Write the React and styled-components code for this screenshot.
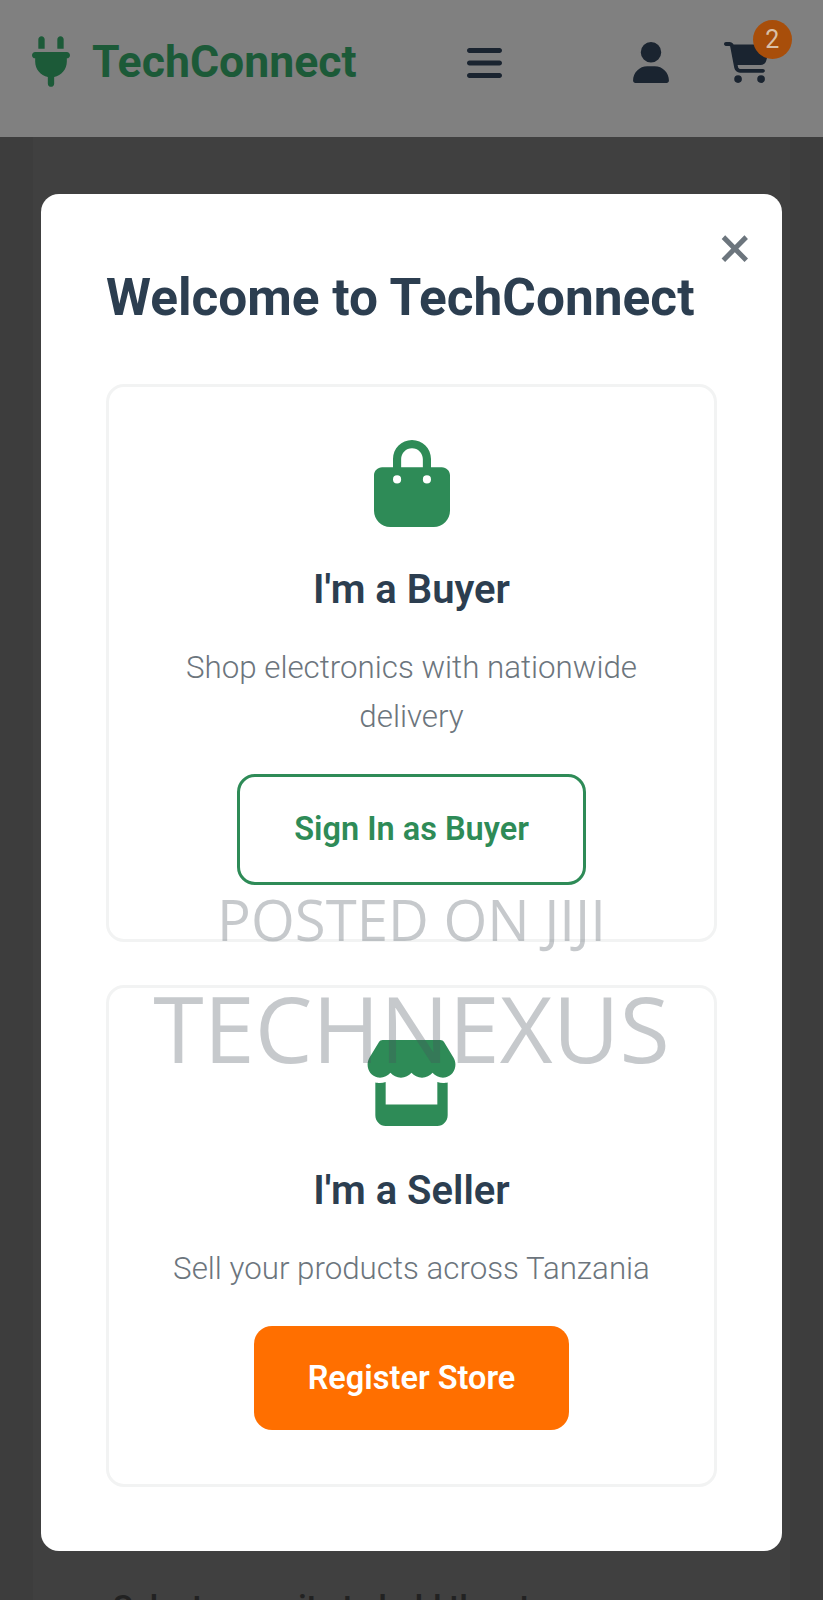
import React from 'react'
import styled, { createGlobalStyle } from 'styled-components'
import { FaPlug, FaBars, FaUser, FaCartShopping, FaBagShopping, FaStore } from 'react-icons/fa6'

const GlobalStyle = createGlobalStyle`
  html, body {
    margin: 0;
    padding: 0;
    height: 100%;
    overflow: hidden;
    background: #3d3d3d;
    font-family: Roboto, "Liberation Sans", sans-serif;
  }
  * { box-sizing: border-box; }
`

const Page = styled.div`
  position: relative;
  height: 1600px;
  overflow: hidden;
`

const Header = styled.header`
  display: flex;
  align-items: flex-start;
  height: 137px;
  padding: 36px 0 0 32px;
  background: #808080;
`

const Logo = styled.div`
  display: flex;
  align-items: flex-start;
  gap: 22px;
  color: #1c5a38;
  svg { width: 38px; height: 51px; }
`

const LogoText = styled.span`
  margin-top: 2px;
  font-size: 44.6px;
  font-weight: 700;
  line-height: 48px;
`

const MenuButton = styled.div`
  display: flex;
  margin: 7px 0 0 110px;
  color: #1a2430;
  svg { width: 35px; height: 40px; }
`

const HeaderIcons = styled.div`
  display: flex;
  align-items: flex-start;
  gap: 55px;
  margin: 6px 0 0 131px;
  color: #1a2430;
`

const UserIcon = styled(FaUser)`
  width: 36px;
  height: 41px;
`

const CartLink = styled.div`
  position: relative;
  display: flex;
  svg { width: 46px; height: 41px; }
`

const CartBadge = styled.span`
  position: absolute;
  top: -22px;
  right: -22px;
  width: 39px;
  height: 39px;
  border-radius: 50%;
  background: #a84e0a;
  color: #d9c0a8;
  font-size: 25px;
  line-height: 39px;
  text-align: center;
`

const Main = styled.main`
  margin: 0 33px;
  padding: 57px 8px 0;
  height: 1463px;
  background: #404040;
`

const Modal = styled.section`
  position: relative;
  padding: 72px 65px 64px;
  border-radius: 18px;
  background: #fff;
`

const CloseButton = styled.span`
  position: absolute;
  top: 18px;
  right: 31px;
  color: #6c757d;
  font-size: 60px;
  font-weight: 400;
  line-height: 72px;
`

const Title = styled.h2`
  margin: 0 0 54px;
  color: #2c3e50;
  font-size: 51.4px;
  font-weight: 700;
  line-height: 64px;
  white-space: nowrap;
`

const RoleCard = styled.div`
  display: flex;
  flex-direction: column;
  align-items: center;
  margin-top: ${(p) => (p.$first ? 0 : '43px')};
  padding: ${(p) => (p.$first ? '53px 20px 54px' : '52px 20px 54px')};
  border: 3px solid #f2f3f3;
  border-radius: 18px;
  text-align: center;
`

const RoleIcon = styled.div`
  display: flex;
  margin-bottom: ${(p) => p.$gap}px;
  color: #2e8b57;
  svg { width: ${(p) => p.$width}px; height: ${(p) => p.$height}px; }
`

const RoleTitle = styled.h3`
  margin: 0 0 31px;
  color: #2c3e50;
  font-size: 40px;
  font-weight: 600;
  line-height: 44px;
`

const RoleText = styled.p`
  max-width: 500px;
  margin: 0 0 ${(p) => p.$gap}px;
  color: #6c757d;
  font-size: 31.3px;
  font-weight: 300;
  line-height: 49px;
`

const RoleButton = styled.div`
  padding: ${(p) => (p.$outline ? '31px 54px' : '30.5px 53.5px')};
  border: ${(p) => (p.$outline ? '3px solid #2e8b57' : 'none')};
  border-radius: 18px;
  background: ${(p) => (p.$outline ? '#fff' : '#ff6f00')};
  color: ${(p) => (p.$outline ? '#2e8b57' : '#fff')};
  font-size: 32.5px;
  font-weight: 600;
  line-height: 43px;
`

const Behind = styled.p`
  margin: 37px 0 0 72px;
  color: #222;
  font-size: 32px;
  font-weight: 600;
  line-height: 36px;
  white-space: nowrap;
`

const Watermark = styled.div`
  position: absolute;
  top: 883px;
  left: 0;
  right: 0;
  display: flex;
  flex-direction: column;
  align-items: center;
  color: rgba(70, 80, 90, 0.31);
  font-family: "Open Sans", "Noto Sans", sans-serif;
  font-weight: 400;
  pointer-events: none;
`

const WatermarkSmall = styled.span`
  font-size: 56.3px;
  line-height: 72px;
`

const WatermarkLarge = styled.span`
  margin-top: 10px;
  font-size: 91.6px;
  line-height: 125px;
`

export default function App() {
  return (
    <>
      <GlobalStyle />
      <Page>
        <Header>
          <Logo>
            <FaPlug />
            <LogoText>TechConnect</LogoText>
          </Logo>
          <MenuButton>
            <FaBars />
          </MenuButton>
          <HeaderIcons>
            <UserIcon />
            <CartLink>
              <FaCartShopping />
              <CartBadge>2</CartBadge>
            </CartLink>
          </HeaderIcons>
        </Header>
        <Main>
          <Modal>
            <CloseButton>×</CloseButton>
            <Title>Welcome to TechConnect</Title>
            <RoleCard $first>
              <RoleIcon $width={76} $height={87} $gap={41}>
                <FaBagShopping />
              </RoleIcon>
              <RoleTitle>I'm a Buyer</RoleTitle>
              <RoleText $gap={33}>Shop electronics with nationwide delivery</RoleText>
              <RoleButton $outline>Sign In as Buyer</RoleButton>
            </RoleCard>
            <RoleCard>
              <RoleIcon $width={93} $height={86} $gap={43}>
                <FaStore preserveAspectRatio="none" />
              </RoleIcon>
              <RoleTitle>I'm a Seller</RoleTitle>
              <RoleText $gap={33}>Sell your products across Tanzania</RoleText>
              <RoleButton>Register Store</RoleButton>
            </RoleCard>
          </Modal>
          <Behind>Select your site to hold the store</Behind>
        </Main>
        <Watermark>
          <WatermarkSmall>POSTED ON JIJI</WatermarkSmall>
          <WatermarkLarge>TECHNEXUS</WatermarkLarge>
        </Watermark>
      </Page>
    </>
  )
}
